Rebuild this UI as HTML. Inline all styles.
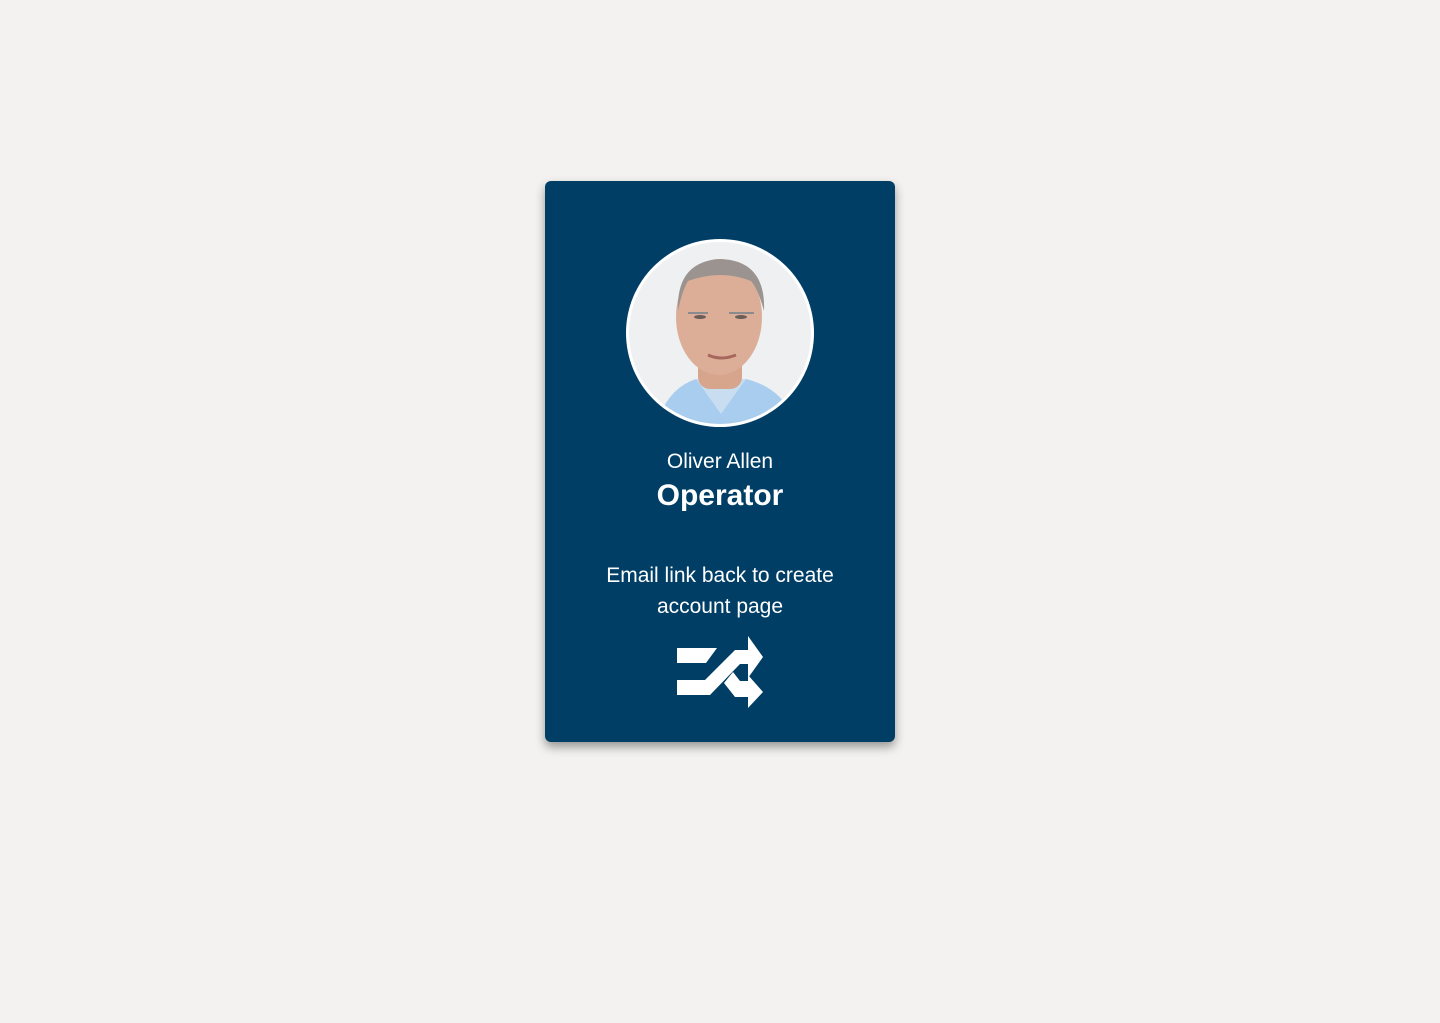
<!DOCTYPE html>
<html><head><style>
body{margin:0;width:1440px;height:1023px;background:#f3f2f0;font-family:"Liberation Sans",sans-serif;position:relative;overflow:hidden}
.card{position:absolute;left:545px;top:181px;width:350px;height:561px;background:#003e66;border-radius:6px;box-shadow:0 5px 10px rgba(0,0,0,.38)}
.t{position:absolute;left:0;width:100%;text-align:center;color:#fff}
</style></head><body>
<div class="card">
<svg style="position:absolute;left:81px;top:58px" width="188" height="188" viewBox="0 0 188 188">
<defs><clipPath id="c"><circle cx="94" cy="94" r="91"/></clipPath></defs>
<circle cx="94" cy="94" r="94" fill="#fff"/>
<g clip-path="url(#c)">
<rect width="188" height="188" fill="#eef0f2"/>
<path d="M30 188 Q40 150 70 140 L120 140 Q160 150 170 188Z" fill="#a9cdee"/>
<path d="M70 140 L95 175 L120 140Z" fill="#c8ddf0"/>
<rect x="72" y="110" width="44" height="40" rx="12" fill="#d7a48c"/>
<ellipse cx="93" cy="78" rx="43" ry="58" fill="#dcae97"/>
<path d="M52 72 Q50 22 95 20 Q140 22 138 72 Q132 50 125 42 Q95 30 62 42 Q56 52 52 72Z" fill="#9a938f"/>
<path d="M62 74 H82 M103 74 H128" stroke="#8a8a8f" stroke-width="2"/>
<ellipse cx="74" cy="78" rx="6" ry="2" fill="#6b5d58"/>
<ellipse cx="115" cy="78" rx="6" ry="2" fill="#6b5d58"/>
<path d="M82 116 Q95 122 110 116" stroke="#a7675d" stroke-width="3" fill="none"/>
</g>
</svg>
<div class="t" style="top:269px;font-size:21px">Oliver Allen</div>
<div class="t" style="top:298px;font-size:30px;font-weight:bold">Operator</div>
<div class="t" style="top:379px;font-size:21px;line-height:31px">Email link back to create<br>account page</div>
<svg style="position:absolute;left:0;top:0" width="350" height="561" viewBox="545 181 350 561">
<g fill="#fff">
<polygon points="677,648 717,648 706,663 677,663"/>
<polygon points="677,680 705,680 735,650 748,650 748,636 763,657 748,678 748,664 740,664 710,695 677,695"/>
<polygon points="724,683 733,672 740,681 748,681 748,675 763,692 748,708 748,697 735,697"/>
</g>
</svg>
</div>
</body></html>
